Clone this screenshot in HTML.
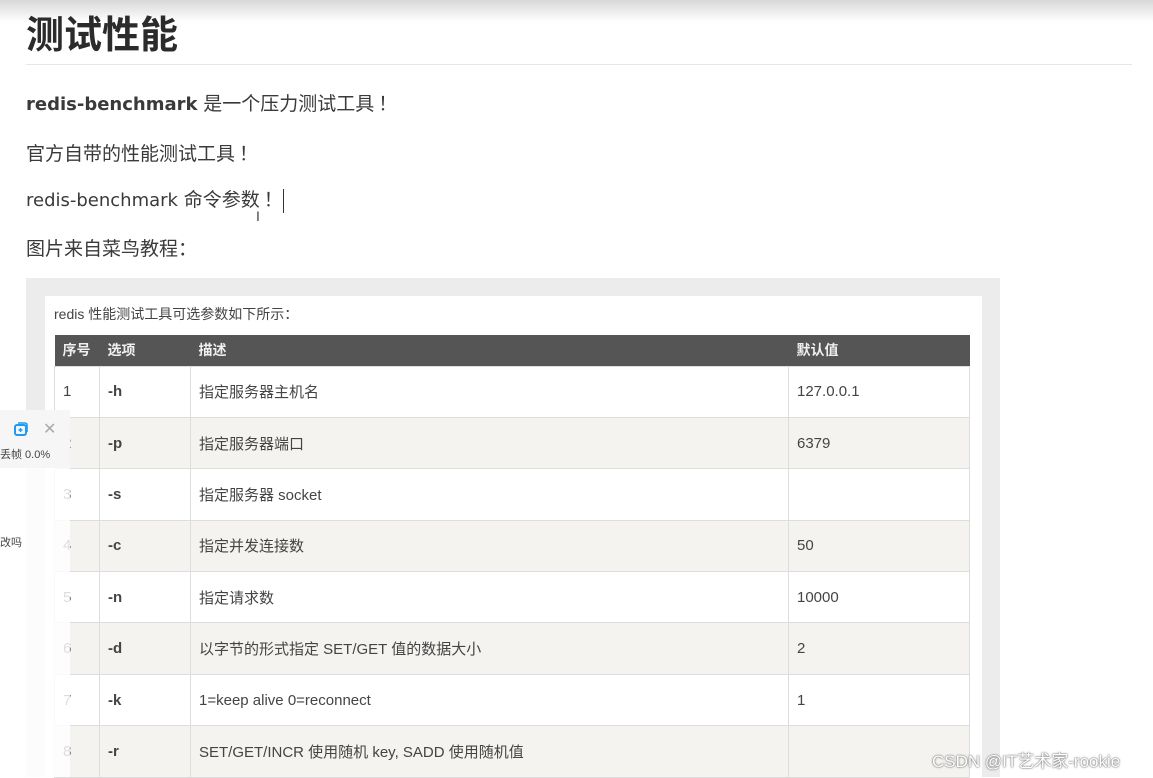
<!DOCTYPE html>
<html><head><meta charset="utf-8"><style>
*{margin:0;padding:0;box-sizing:border-box}
body{width:1153px;height:777px;overflow:hidden;background:#fff;position:relative;font-family:"Liberation Sans","Noto Sans CJK SC",sans-serif;color:#333}
.topg{position:absolute;left:0;top:0;width:1153px;height:22px;background:linear-gradient(#d8d8d8,#fff)}
h1{position:absolute;left:26px;top:6px;font-size:38px;font-weight:bold;color:#2b2b2b;font-family:"Noto Sans CJK SC",sans-serif;line-height:52px}
.hr{position:absolute;left:26px;top:64px;width:1106px;height:1px;background:#e6e6e6}
.p{position:absolute;left:26px;font-size:18px;color:#3a3a3a;font-family:"DejaVu Sans","Noto Sans CJK SC",sans-serif;line-height:24px;white-space:nowrap}
.p .z{font-family:"Noto Sans CJK SC",sans-serif;font-size:19px}
.x{display:inline-block;margin-left:4px}
.frame{position:absolute;left:26px;top:278px;width:974px;height:499px;background:#ececec}
.panel{position:absolute;left:45px;top:296px;width:937px;height:481px;background:#fff}
.cap{position:absolute;left:54px;top:304px;font-size:14px;color:#444}
table{position:absolute;left:54px;top:335px;width:916px;border-collapse:collapse;font-size:15px;color:#444}
th{background:#555;color:#f0f0f0;height:31px;text-align:left;padding-left:8px;font-size:14px;font-family:"Noto Sans CJK SC",sans-serif}
td{height:51.4px;border:1px solid #ddd;padding-left:8px}
td:nth-child(2){font-weight:bold}
tr:nth-child(odd) td{background:#f4f3f0}
.ov{position:absolute;left:0;top:410px;width:70px;height:367px;background:rgba(255,255,255,.82)}
.ov2{position:absolute;left:0;top:410px;width:70px;height:58px;background:#f6f6f6}
.ctrl{position:absolute;font-size:11px;color:#444}
.wm{position:absolute;left:932px;top:747px;font-size:17px;color:#fff;text-shadow:0 0 2px #666,0 0 1px #666}
</style></head><body>
<div class="topg"></div>
<h1>测试性能</h1>
<div class="hr"></div>
<div class="p" style="top:91px"><b>redis-benchmark</b> <span class="z">是一个压力测试工具<span class="x">！</span></span></div>
<div class="p" style="top:141px"><span class="z">官方自带的性能测试工具<span class="x">！</span></span></div>
<div class="p" style="top:187px">redis-benchmark <span class="z">命令参数<span class="x">！</span></span><span style="display:inline-block;width:1px;height:24px;background:#333;vertical-align:middle"></span></div>
<div style="position:absolute;left:256px;top:208px;font-size:14px;color:#444">I</div>
<div class="p" style="top:236px"><span class="z">图片来自菜鸟教程：</span></div>
<div class="frame"></div>
<div class="panel"></div>
<div class="cap">redis 性能测试工具可选参数如下所示：</div>
<table>
<tr><th style="width:45px">序号</th><th style="width:91px">选项</th><th style="width:598px">描述</th><th>默认值</th></tr>
<tr><td>1</td><td>-h</td><td>指定服务器主机名</td><td>127.0.0.1</td></tr>
<tr><td>2</td><td>-p</td><td>指定服务器端口</td><td>6379</td></tr>
<tr><td>3</td><td>-s</td><td>指定服务器 socket</td><td></td></tr>
<tr><td>4</td><td>-c</td><td>指定并发连接数</td><td>50</td></tr>
<tr><td>5</td><td>-n</td><td>指定请求数</td><td>10000</td></tr>
<tr><td>6</td><td>-d</td><td>以字节的形式指定 SET/GET 值的数据大小</td><td>2</td></tr>
<tr><td>7</td><td>-k</td><td>1=keep alive 0=reconnect</td><td>1</td></tr>
<tr><td>8</td><td>-r</td><td>SET/GET/INCR 使用随机 key, SADD 使用随机值</td><td></td></tr>
</table>
<div class="ov"></div>
<div class="ov2"></div>
<svg style="position:absolute;left:13px;top:421px" width="16" height="16" viewBox="0 0 16 16"><rect x="2" y="4" width="11" height="10" rx="2" fill="none" stroke="#1e9bf0" stroke-width="2"/><path d="M5 2h7a2 2 0 0 1 2 2v7" fill="none" stroke="#1e9bf0" stroke-width="1.6"/><path d="M7.5 7v4M5.5 9h4" stroke="#1e9bf0" stroke-width="1.5"/></svg>
<div class="ctrl" style="left:43px;top:419px;font-size:16px;color:#aaa">✕</div>
<div class="ctrl" style="left:0;top:446px">丢帧 0.0%</div>
<div class="ctrl" style="left:0;top:534px">改吗</div>
<div class="wm">CSDN @IT艺术家-rookie</div>
</body></html>
